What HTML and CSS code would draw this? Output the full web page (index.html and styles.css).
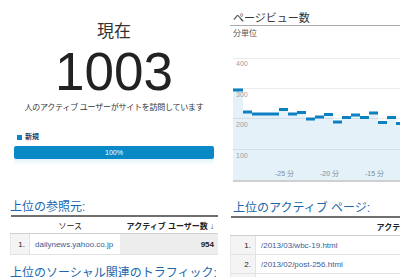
FILE: index.html
```html
<!DOCTYPE html>
<html lang="ja">
<head>
    <meta charset="UTF-8">
    <title>リアルタイム</title>
    <link rel="stylesheet" href="styles.css">
</head>
<body>
    <div id="page">
        <div class="column left">
            <div class="nowLabel">現在</div>
            <div class="nowCount">1003</div>
            <div class="nowText">人のアクティブ ユーザーがサイトを訪問しています</div>
            <div class="legend"><span class="legendBox"></span>新規</div>
            <div class="bar">100%</div>
            <div class="barShadow"></div>

            <h2 class="sectionTitle">上位の参照元:</h2>
            <table class="dataTable">
                <tr>
                    <th class="srcHead" colspan="2">ソース</th>
                    <th class="valHead">アクティブ ユーザー数 ↓</th>
                </tr>
                <tr>
                    <td class="num">1.</td>
                    <td class="src"><a href="#">dailynews.yahoo.co.jp</a></td>
                    <td class="val">954</td>
                </tr>
            </table>

            <h2 class="sectionTitle next">上位のソーシャル関連のトラフィック:</h2>
        </div>

        <div class="column right">
            <div class="chartTitle">ページビュー数</div>
            <div class="chartSub">分単位</div>
            <svg class="chart" width="240" height="126" viewBox="0 0 240 126">
                <path fill="#e4f1f9" d="M0,124 L0,34 L10,34 L10,56 L19,56 L19,58 L46,58 L46,53.5 L55,53.5 L55,58 L64,58 L64,56.5 L73,56.5 L73,63 L82,63 L82,61 L91,61 L91,58.5 L100,58.5 L100,66 L109,66 L109,61.5 L118,61.5 L118,59 L127,59 L127,61.5 L136,61.5 L136,57 L145,57 L145,66.5 L154,66.5 L154,61.5 L163,61.5 L163,67.5 L172,67.5 L172,64 L181,64 L181,60 L190,60 L190,124 Z"/>
                <g stroke="#000" stroke-opacity="0.08" stroke-width="1">
                    <line x1="0" y1="2.5" x2="240" y2="2.5"/>
                    <line x1="0" y1="32.5" x2="240" y2="32.5"/>
                    <line x1="0" y1="62.5" x2="240" y2="62.5"/>
                    <line x1="0" y1="93.5" x2="240" y2="93.5"/>
                </g>
                <g fill="#0b80c2">
                    <rect x="0" y="32.5" width="10" height="3"/>
                    <rect x="10" y="54.5" width="9" height="3"/>
                    <rect x="19" y="56.5" width="27" height="3"/>
                    <rect x="46" y="52" width="9" height="3"/>
                    <rect x="55" y="56.5" width="9" height="3"/>
                    <rect x="64" y="55" width="9" height="3"/>
                    <rect x="73" y="61.5" width="9" height="3"/>
                    <rect x="82" y="59.5" width="9" height="3"/>
                    <rect x="91" y="57" width="9" height="3"/>
                    <rect x="100" y="64.5" width="9" height="3"/>
                    <rect x="109" y="60" width="9" height="3"/>
                    <rect x="118" y="57.5" width="9" height="3"/>
                    <rect x="127" y="60" width="9" height="3"/>
                    <rect x="136" y="55.5" width="9" height="3"/>
                    <rect x="145" y="65" width="9" height="3"/>
                    <rect x="154" y="60" width="9" height="3"/>
                    <rect x="163" y="66" width="9" height="3"/>
                    <rect x="172" y="62.5" width="9" height="3"/>
                    <rect x="181" y="58.5" width="9" height="3"/>
                </g>
                <g class="axisY">
                    <text x="3" y="10">400</text>
                    <text x="3" y="41">300</text>
                    <text x="3" y="71">200</text>
                    <text x="3" y="102">100</text>
                </g>
                <g class="axisX">
                    <text x="42" y="120">-25 分</text>
                    <text x="87" y="120">-20 分</text>
                    <text x="132" y="120">-15 分</text>
                </g>
                <rect x="0" y="124" width="240" height="2" fill="#cfcfcf"/>
            </svg>

            <h2 class="sectionTitle">上位のアクティブ ページ:</h2>
            <table class="dataTable pages">
                <tr>
                    <th class="valHead" colspan="2">アクティブ ユーザー数 ↓</th>
                </tr>
                <tr>
                    <td class="num">1.</td>
                    <td class="src"><a href="#">/2013/03/wbc-19.html</a></td>
                </tr>
                <tr>
                    <td class="num">2.</td>
                    <td class="src"><a href="#">/2013/02/post-256.html</a></td>
                </tr>
                <tr>
                    <td class="num"></td>
                    <td class="src"></td>
                </tr>
            </table>
        </div>
    </div>
</body>
</html>
```

FILE: styles.css
```css
body {
    margin: 0;
    padding: 0;
    overflow: hidden;
    background: #fff;
    color: #222;
    font-family: 'Liberation Sans', 'Noto Sans CJK JP', sans-serif;
}

#page {
    display: flex;
    gap: 12px;
    padding-left: 10px;
    width: 720px;
}

.column {
    display: flex;
    flex-direction: column;
}

.left {
    width: 208px;
    flex: none;
}

.right {
    width: 234px;
    flex: none;
}

.nowLabel {
    margin-top: 22px;
    font-size: 17px;
    line-height: 20px;
    text-align: center;
    color: #333;
}

.nowCount {
    margin-top: 3px;
    font-size: 53px;
    line-height: 53px;
    text-align: center;
    color: #222;
}

.nowText {
    margin-top: 4px;
    font-size: 8px;
    line-height: 12px;
    letter-spacing: -0.25px;
    text-align: center;
    color: #333;
}

.legend {
    margin-top: 18px;
    padding-left: 7px;
    font-size: 7px;
    line-height: 10px;
    font-weight: bold;
    color: #1d3b63;
    display: flex;
    align-items: center;
    gap: 3px;
}

.legendBox {
    width: 5px;
    height: 5px;
    background-color: #0b87c8;
}

.bar {
    margin: 4px 4px 0 4px;
    height: 13px;
    line-height: 13px;
    border-radius: 2px;
    background-color: #0a89c7;
    color: #fff;
    font-size: 7px;
    text-align: center;
}

.barShadow {
    margin: 0 4px;
    height: 6px;
    background: linear-gradient(#d9eef8, #fff);
    opacity: 0.7;
}

.sectionTitle {
    margin: 35px 0 0 0;
    font-size: 12px;
    line-height: 14px;
    font-weight: normal;
    color: #1a67ab;
}

.right .sectionTitle {
    margin-top: 19px;
    padding-left: 3px;
}

.sectionTitle.next {
    margin-top: 11px;
}

.dataTable {
    margin-top: 1px;
    border-collapse: collapse;
    border-top: 2px solid #6f6f6f;
    width: 100%;
    font-size: 8px;
}

.dataTable th {
    height: 16px;
    padding: 0 4px;
    font-weight: bold;
    border-bottom: 1px solid #cfcfcf;
    white-space: nowrap;
}

.srcHead {
    text-align: center;
    font-weight: normal !important;
    padding-left: 14px !important;
}

.valHead {
    text-align: right;
}

.dataTable td {
    height: 20px;
    border-bottom: 1px solid #e3e3e3;
    white-space: nowrap;
}

.dataTable .num {
    width: 10px;
    padding: 0 4px;
    text-align: right;
    background-color: #f4f4f4;
    border-left: 1px solid #e8e8e8;
    border-right: 1px solid #e3e3e3;
}

.dataTable .src {
    padding: 0 5px;
}

.dataTable .val {
    width: 90px;
    padding: 0 4px;
    text-align: right;
    font-weight: bold;
    background-color: #ededed;
}

.dataTable a {
    color: #3a5c94;
    text-decoration: none;
}

.pages {
    margin-top: 1px;
}

.pages th {
    height: 17px;
    padding-right: 0;
}

.pages td {
    height: 18px;
}

.pages .num {
    width: 16px;
}

.chartTitle {
    margin-top: 11px;
    padding-left: 3px;
    font-size: 11px;
    line-height: 14px;
    color: #333;
    border-bottom: 1px solid #aaa;
}

.chartSub {
    margin-top: 3px;
    padding-left: 3px;
    font-size: 8px;
    line-height: 10px;
    color: #555;
}

.chart {
    display: block;
    margin: 17px 0 0 3px;
}

.axisY text {
    font-size: 7px;
    fill: #a0a0a0;
    font-family: 'Liberation Sans', sans-serif;
}

.axisX text {
    font-size: 7px;
    fill: #7d8d9c;
    font-family: 'Liberation Sans', 'Noto Sans CJK JP', sans-serif;
}
```
